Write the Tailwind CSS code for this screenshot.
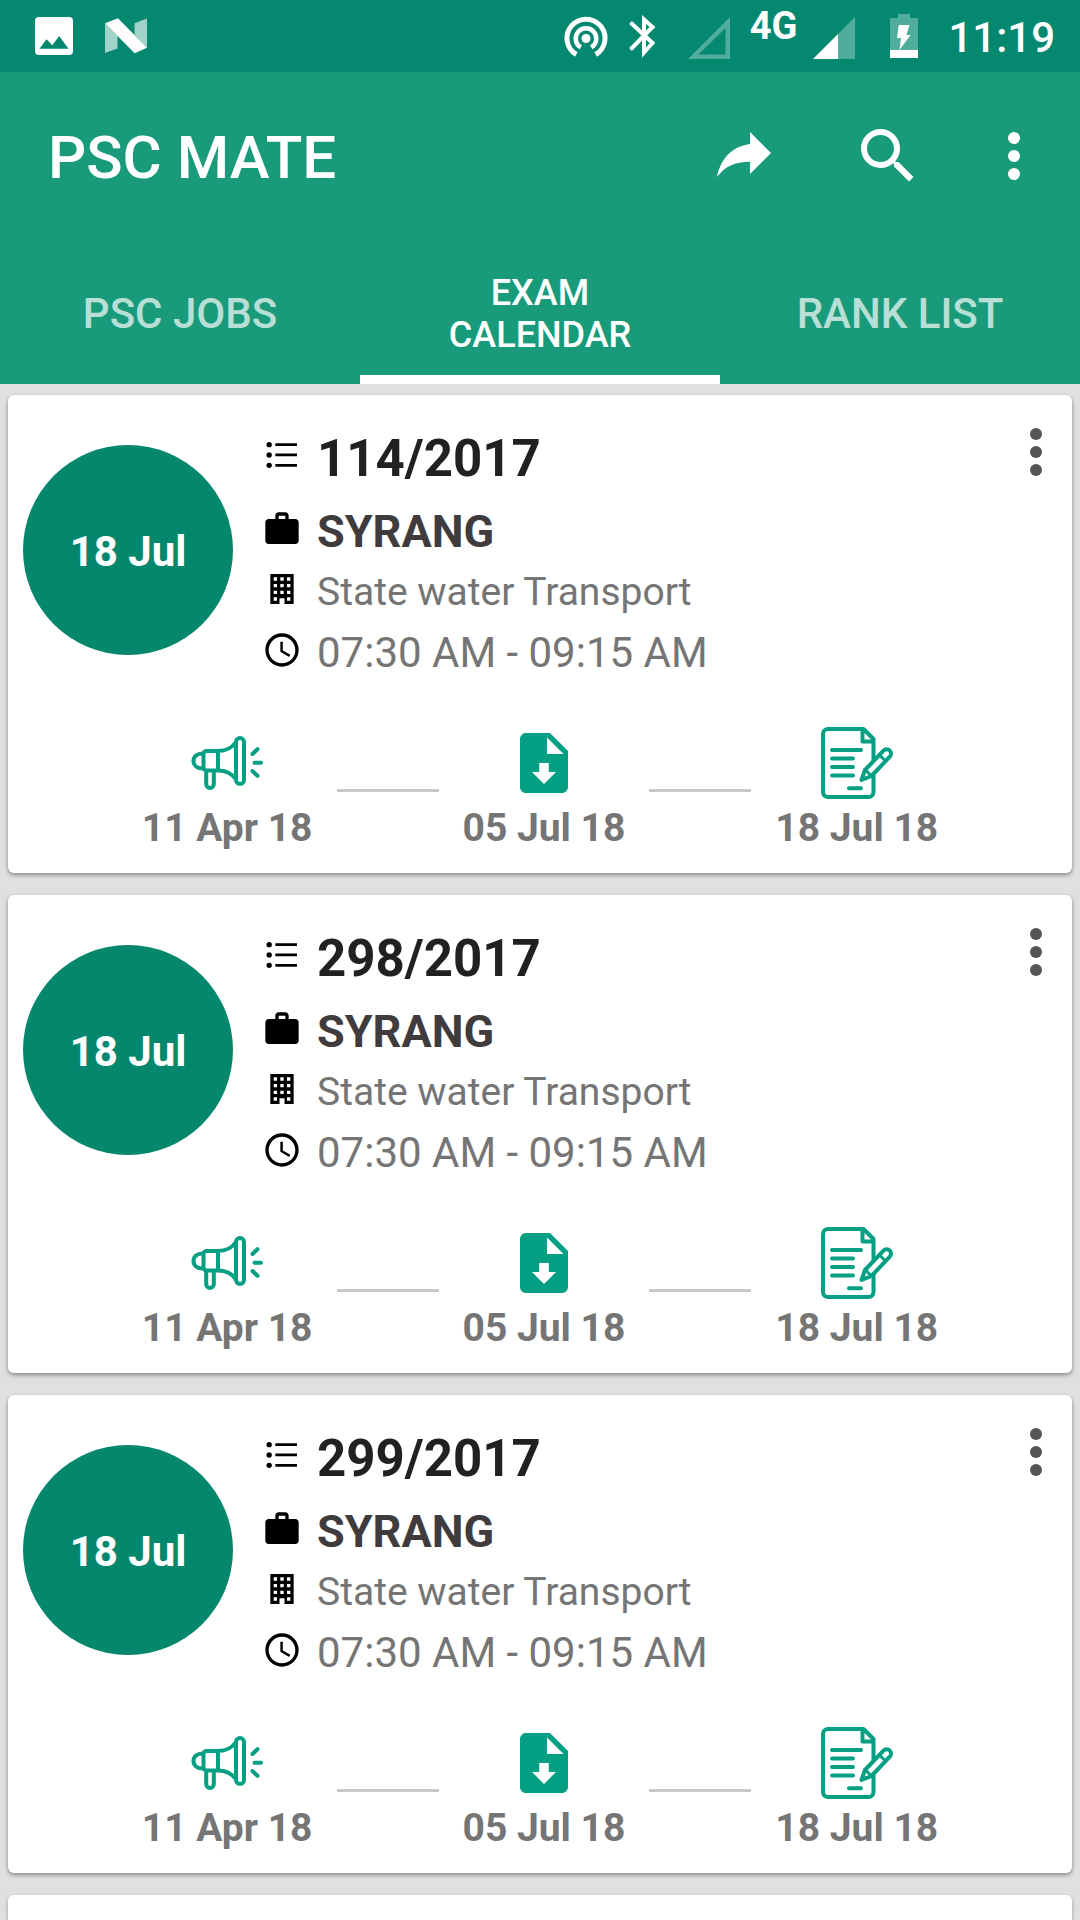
<!DOCTYPE html>
<html lang="en">
<head>
  <meta charset="UTF-8" />
  <meta name="viewport" content="width=device-width, initial-scale=1.0"/>
  <title>PSC MATE</title>
  <script src="https://cdn.jsdelivr.net/npm/@tailwindcss/browser@4"></script>
  <style>
    body {
      font-family: Roboto, 'Noto Sans', sans-serif;
    }
    button {
      cursor: pointer;
    }
  </style>
</head>
<body class="bg-[#e0e0e0] min-h-screen flex flex-col">

  <!-- icons used more than once -->
  <svg class="hidden" aria-hidden="true">
    <symbol id="i-more" viewBox="0 0 24 24">
      <circle cx="12" cy="6" r="2"/><circle cx="12" cy="12" r="2"/><circle cx="12" cy="18" r="2"/>
    </symbol>
    <symbol id="i-list" viewBox="0 0 24 24">
      <path d="M8 4.300h13v1.700H8zM8 10.500h13v1.700H8zM8 16.800h13v1.700H8z"/>
      <circle cx="4.300" cy="5.200" r="1.600"/><circle cx="4.300" cy="11.400" r="1.600"/><circle cx="4.300" cy="17.600" r="1.600"/>
    </symbol>
    <symbol id="i-work" viewBox="0 0 24 24">
      <path d="M20 6h-4V4c0-1.110-.89-2-2-2h-4c-1.110 0-2 .89-2 2v2H4c-1.110 0-1.990.89-1.990 2L2 19c0 1.110.89 2 2 2h16c1.110 0 2-.89 2-2V8c0-1.110-.89-2-2-2zm-6 0h-4V4h4v2z"/>
    </symbol>
    <symbol id="i-building" viewBox="0 0 24 24">
      <path fill-rule="evenodd" d="M5 3h14v18h-5.500v-3.500h-3V21H5zM7 5v2h2V5zM11 5v2h2V5zM15 5v2h2V5zM7 9v2h2V9zM11 9v2h2V9zM15 9v2h2V9zM7 13v2h2v-2zM11 13v2h2v-2zM15 13v2h2v-2zM7 17v2h2v-2zM15 17v2h2v-2z"/>
    </symbol>
    <symbol id="i-clock" viewBox="0 0 24 24">
      <path d="M11.990 2C6.470 2 2 6.480 2 12s4.470 10 9.990 10C17.520 22 22 17.520 22 12S17.520 2 11.990 2zM12 20c-4.420 0-8-3.580-8-8s3.580-8 8-8 8 3.580 8 8-3.580 8-8 8z"/>
      <path d="M12.500 7H11v6l5.250 3.150.75-1.230-4.500-2.670z"/>
    </symbol>
    <symbol id="i-megaphone" viewBox="0 0 72 72">
      <g fill="none" stroke="currentColor" stroke-width="4" stroke-linecap="round" stroke-linejoin="round">
        <rect x="45" y="11" width="8" height="46" rx="4"/>
        <path d="M27 24H15.500a3 3 0 0 0-3 3v13.500a3 3 0 0 0 3 3H27zM27 24c7 0 14-3 18-9M27 43.500c7 0 14 3 18 9"/>
        <path d="M12 26.500c-6 0-9.500 3-9.500 7.500s3.500 7.500 9.500 7.500"/>
        <path d="M15.200 44v13.200a3.800 3.800 0 0 0 7.600 0V44"/>
        <path d="M61.500 27l5-4.800M63.500 35.700h6.500M61.500 44l5 4.800"/>
      </g>
    </symbol>
    <symbol id="i-download" viewBox="0 0 24 24">
      <path fill-rule="evenodd" d="M14 2H6c-1.100 0-2 .9-2 2v16c0 1.100.9 2 2 2h12c1.100 0 2-.9 2-2V8zM13 3.500V9h5.500zM10.400 12h3.200v3H16l-4 4-4-4h2.400z"/>
    </symbol>
    <symbol id="i-exam" viewBox="0 0 72 72">
      <g fill="none" stroke="currentColor" stroke-width="4" stroke-linecap="round" stroke-linejoin="round">
        <path d="M42.500 2H7a5 5 0 0 0-5 5v58a5 5 0 0 0 5 5h40.500a5 5 0 0 0 5-5V12zM41.500 3v11.500h10.500"/>
        <path d="M11 23h29M11 31.500h21M11 40h21M11 48.500h21M28 61.300h12"/>
        <path fill="#fff" d="M40.500 53L44 43 62.500 23.700a4.300 4.300 0 0 1 6.300 6L50.500 49z"/>
        <path stroke-width="3" d="M44.500 43l6 6M58.500 28l6 6"/>
      </g>
    </symbol>
  </svg>

  <!-- status bar -->
  <div class="bg-[#058870] text-white h-[72px] pl-[35px] pr-[25px] flex items-center justify-between">
    <div class="flex items-center gap-8">
      <svg class="w-[38px] h-[38px]" viewBox="0 0 38 38">
        <rect width="38" height="38" rx="4" fill="#fff"/>
        <path d="M4.500 31.700l7-9.400 5.800 6 6.900-9.300 9.300 12.700z" fill="#058870"/>
      </svg>
      <svg class="w-[42px] h-9" viewBox="0 0 42 36" fill="#fff">
        <path opacity=".63" d="M0 5.300V35l12.500-4.500V18zM29.600 5.300L42 .5v29.200L29.600 17z"/>
        <path d="M0 5.300L13 .3l29 29.400-12.400 5.600z"/>
      </svg>
    </div>
    <div class="flex items-center">
      <svg class="mt-1 w-11 h-11" viewBox="0 0 44 44" fill="none" stroke="#fff">
        <path stroke-width="5" d="M12.300 38.500a19 19 0 1 1 19.400 0"/>
        <path stroke-width="4.500" d="M16.800 31.400a10.300 10.300 0 1 1 10.400 0"/>
        <circle cx="22" cy="22.500" r="4.500" fill="#fff" stroke="none"/>
      </svg>
      <svg class="ml-[21px] w-[27px] h-11" viewBox="0 0 27 44" fill="none" stroke="#fff" stroke-width="4">
        <path d="M1.500 8.500l22 20.500L15 38.500V5.500l8.500 7.500L1.500 35.500"/>
      </svg>
      <svg class="ml-8 mt-1 w-[42px] h-[42px]" viewBox="0 0 42 42">
        <path fill="#fff" fill-opacity=".3" fill-rule="evenodd" d="M42 0v42H0zM37.500 11L10.500 37.500h27z"/>
      </svg>
      <span class="ml-5 mb-5 text-[38px] leading-10 font-bold">4G</span>
      <svg class="ml-4 mt-1 w-[42px] h-[42px]" viewBox="0 0 42 42" fill="#fff">
        <path opacity=".3" d="M42 0v42H25V17z"/>
        <path d="M25 17v25H0z"/>
      </svg>
      <svg class="ml-[35px] w-7 h-11" viewBox="0 0 28 44" fill="#fff">
        <path opacity=".3" d="M8 0h12v4h8v32H0V4h8z"/>
        <path d="M0 36h28v8H0zM8.800 11h10.700l-3.100 10h4.100L9.500 36 11 24H7z"/>
      </svg>
      <span class="ml-[30px] pt-1 text-[42px] leading-[48px] font-medium">11:19</span>
    </div>
  </div>

  <header class="bg-[#199b7b] text-white">
    <div class="h-[168px] pl-12 pr-[30px] flex items-center">
      <h1 class="pt-1 text-[60px] leading-[72px] font-medium mr-auto">PSC MATE</h1>
      <button type="button" aria-label="Share" class="mr-[72px]">
        <svg class="w-[72px] h-[72px]" viewBox="0 1 24 24" fill="currentColor"><path d="M14 9V5l7 7-7 7v-4.100c-5 0-8.500 1.600-11 5.100 1-5 4-10 11-11z"/></svg>
      </button>
      <button type="button" aria-label="Search" class="mr-[54px]">
        <svg class="w-[72px] h-[72px]" viewBox="0 0 24 24" fill="currentColor"><path d="M15.500 14h-.79l-.28-.27A6.471 6.471 0 0 0 16 9.500 6.500 6.500 0 1 0 9.500 16c1.610 0 3.090-.59 4.230-1.570l.27.28v.79l5 4.990L20.490 19zm-6 0C7.010 14 5 11.990 5 9.500S7.010 5 9.500 5 14 7.010 14 9.500 11.990 14 9.500 14z"/></svg>
      </button>
      <button type="button" aria-label="More options">
        <svg class="w-[72px] h-[72px]" fill="currentColor"><use href="#i-more"/></svg>
      </button>
    </div>
    <nav class="grid grid-cols-3 h-36 text-center font-medium">
      <a href="#jobs" class="pt-1 flex items-center justify-center text-[42px] leading-[48px] text-white/70">PSC JOBS</a>
      <a href="#calendar" aria-current="page" class="pt-1 flex items-center justify-center text-[36px] leading-[42px] shadow-[inset_0_-9px_0_#fff]">EXAM<br>CALENDAR</a>
      <a href="#rank" class="pt-1 flex items-center justify-center text-[42px] leading-[48px] text-white/70">RANK LIST</a>
    </nav>
  </header>

  <main class="flex-1 flex flex-col px-2 pt-[11px]">
    <div id="exam-list" class="flex flex-col gap-[22px]"></div>
    <div class="flex-1 mt-[22px] bg-white rounded-t-md shadow-[0_2px_4px_rgba(0,0,0,0.3)]"></div>
  </main>

  <script>
    const exams = [
      { category: "114/2017", post: "SYRANG", dept: "State water Transport", time: "07:30 AM - 09:15 AM", day: "18 Jul", notified: "11 Apr 18", hallTicket: "05 Jul 18", exam: "18 Jul 18" },
      { category: "298/2017", post: "SYRANG", dept: "State water Transport", time: "07:30 AM - 09:15 AM", day: "18 Jul", notified: "11 Apr 18", hallTicket: "05 Jul 18", exam: "18 Jul 18" },
      { category: "299/2017", post: "SYRANG", dept: "State water Transport", time: "07:30 AM - 09:15 AM", day: "18 Jul", notified: "11 Apr 18", hallTicket: "05 Jul 18", exam: "18 Jul 18" }
    ];

    function step(icon, date) {
      return `
        <div class="flex flex-col items-center">
          <svg class="w-[72px] h-[72px] text-[#05a083]" fill="currentColor"><use href="#${icon}"/></svg>
          <span class="text-[39px] leading-[58px] font-bold text-[#757575] whitespace-nowrap">${date}</span>
        </div>`;
    }

    const line = '<div class="w-[102px] h-[3px] mb-1 bg-[#c8c8c8]"></div>';

    document.getElementById('exam-list').innerHTML = exams.map(e => `
      <article class="bg-white rounded-md pt-[21px] pb-4 shadow-[0_2px_4px_rgba(0,0,0,0.4)]">
        <div class="flex items-start pl-[15px]">
          <div class="mt-[29px] pt-1 w-[210px] h-[210px] shrink-0 rounded-full bg-[#05876d] text-white flex items-center justify-center text-[42px] leading-[48px] font-bold">${e.day}</div>
          <div class="ml-[29px] pt-[3px] flex-1">
            <div class="flex items-center gap-[15px] h-20">
              <svg class="w-10 h-10 mb-1.5"><use href="#i-list"/></svg>
              <h2 class="text-[51px] leading-[60px] font-bold text-[#212121]">${e.category}</h2>
            </div>
            <div class="flex items-center gap-[15px] h-[66px]">
              <svg class="w-10 h-10 mb-1.5"><use href="#i-work"/></svg>
              <p class="text-[45px] leading-[54px] font-bold text-[#403c3d]">${e.post}</p>
            </div>
            <div class="flex items-center gap-[15px] h-[54px]">
              <svg class="w-10 h-10 mb-1.5"><use href="#i-building"/></svg>
              <p class="text-[39px] leading-[48px] text-[#757575]">${e.dept}</p>
            </div>
            <div class="flex items-center gap-[15px] h-[68px]">
              <svg class="w-10 h-10 mb-1.5"><use href="#i-clock"/></svg>
              <p class="text-[42px] leading-[48px] text-[#757575]">${e.time}</p>
            </div>
          </div>
          <button type="button" aria-label="Options for ${e.category}" class="text-[#555]">
            <svg class="w-[72px] h-[72px]" fill="currentColor"><use href="#i-more"/></svg>
          </button>
        </div>
        <div class="mt-10 flex items-center justify-center gap-6">
          ${step('i-megaphone', e.notified)}
          ${line}
          ${step('i-download', e.hallTicket)}
          ${line}
          ${step('i-exam', e.exam)}
        </div>
      </article>
    `).join('');
  </script>
</body>
</html>
